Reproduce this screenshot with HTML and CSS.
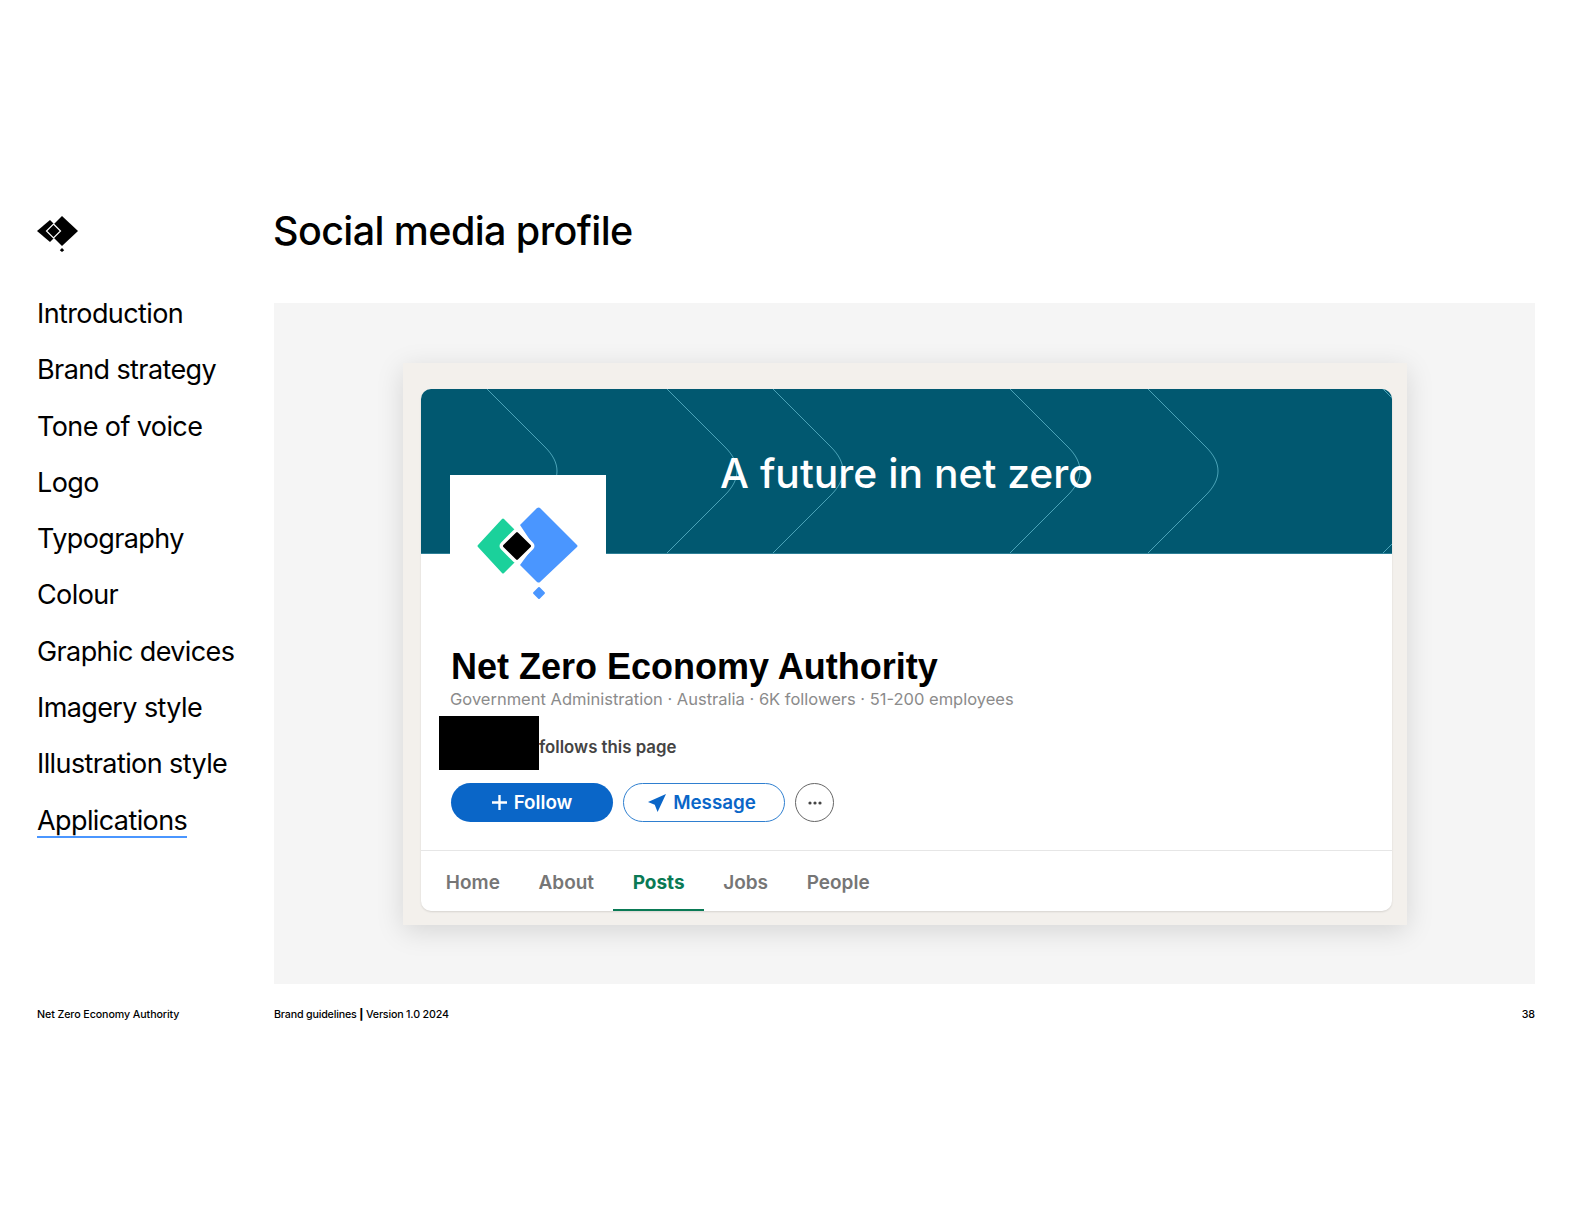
FILE: index.html
```html
<!DOCTYPE html>
<html lang="en">
<head>
<meta charset="utf-8">
<title>Social media profile</title>
<link rel="stylesheet" href="styles.css">
</head>
<body>
<div class="page">
  <div class="brand">
    <svg class="brand-mark" viewBox="0 0 42 36" width="42" height="36" aria-hidden="true">
      <path d="M13 4 L24 15 L13 26 L0 15 Z" fill="#000"/>
      <path d="M25 0 L41 15 L25 30 L10 15 Z" fill="#000"/>
      <path d="M16.500 8 L23.500 15 L16.500 22 L9.500 15 Z" fill="#000" stroke="#fff" stroke-width="1.200"/>
      <path d="M25 32 L27.200 34.200 L25 36 L22.800 34.200 Z" fill="#000"/>
    </svg>
  </div>
  <h1 class="title">Social media profile</h1>

  <nav class="nav">
    <a class="nav-item">Introduction</a>
    <a class="nav-item">Brand strategy</a>
    <a class="nav-item">Tone of voice</a>
    <a class="nav-item">Logo</a>
    <a class="nav-item">Typography</a>
    <a class="nav-item">Colour</a>
    <a class="nav-item">Graphic devices</a>
    <a class="nav-item">Imagery style</a>
    <a class="nav-item">Illustration style</a>
    <a class="nav-item"><span class="nav-current">Applications</span></a>
  </nav>

  <main class="frame">
    <section class="card">
      <div class="profile">
        <div class="banner">
          <svg class="chevrons" viewBox="0 0 971 164" aria-hidden="true">
            <defs>
              <path id="chev" d="M0 0 L58 58 C66 66 70 74 70 82 C70 90 66 98 58 106 L0 164"/>
            </defs>
            <use href="#chev" x="66"/>
            <use href="#chev" x="246"/>
            <use href="#chev" x="352"/>
            <use href="#chev" x="589"/>
            <use href="#chev" x="727"/>
            <use href="#chev" x="962"/>
          </svg>
          <p class="banner-text">A future in net zero</p>
        </div>
        <div class="avatar">
          <svg viewBox="0 0 156 145" width="156" height="145" aria-hidden="true">
            <path d="M54 44 L67 57 L67 85 L54 98 Q53 99 52 98 L28 72 Q27 71 28 70 L52 44 Q53 43 54 44 Z" fill="#1bd19b"/>
            <path d="M87 33 Q89 32 90 33 L127 70 Q128 71 127 72 L90 107 Q89 108 87 107 L70 90 L84 71 L70 50 Z" fill="#4a96ff"/>
            <rect x="55" y="59" width="24" height="24" rx="3" transform="rotate(45 67 71)" fill="#000" stroke="#fff" stroke-width="3.500"/>
            <rect x="84.500" y="113.500" width="9" height="9" rx="1" transform="rotate(45 89 118)" fill="#4a96ff"/>
          </svg>
        </div>
        <div class="details">
          <h2 class="org">Net Zero Economy Authority</h2>
          <p class="meta">Government Administration · Australia · 6K followers · 51-200 employees</p>
          <div class="follows">
            <span class="redact"></span>
            <span class="follows-text">follows this page</span>
          </div>
          <div class="actions">
            <button class="btn btn-follow">
              <svg viewBox="0 0 14 14" width="15" height="15" aria-hidden="true"><path d="M7 0 V14 M0 7 H14" stroke="#fff" stroke-width="2.200"/></svg>
              Follow
            </button>
            <button class="btn btn-message">
              <svg viewBox="0 0 16 16" width="18" height="18" aria-hidden="true"><path d="M16 0 L0 7 L6 9.500 L8.500 16 Z" fill="#0a66c8"/></svg>
              Message
            </button>
            <button class="btn-more" aria-label="More">
              <svg viewBox="0 0 14 4" width="14" height="4" aria-hidden="true"><circle cx="2" cy="2" r="1.600" fill="#444"/><circle cx="7" cy="2" r="1.600" fill="#444"/><circle cx="12" cy="2" r="1.600" fill="#444"/></svg>
            </button>
          </div>
        </div>
        <div class="tabs">
          <a class="tab">Home</a>
          <a class="tab">About</a>
          <a class="tab tab-active">Posts</a>
          <a class="tab">Jobs</a>
          <a class="tab">People</a>
        </div>
      </div>
    </section>
  </main>

  <div class="foot-left">Net Zero Economy Authority</div>
  <footer class="foot-right">
    <span class="foot-doc">Brand guidelines <b>|</b> Version 1.0 2024</span>
    <span>38</span>
  </footer>
</div>
</body>
</html>
```
FILE: styles.css
```css
* { box-sizing: border-box; }
html, body { margin: 0; padding: 0; background: #fff; }
body { font-family: Inter, "Liberation Sans", sans-serif; color: #000; }
a { color: inherit; text-decoration: none; }

.page {
  width: 1584px;
  height: 1224px;
  padding: 216px 49px 0 37px;
  display: grid;
  grid-template-columns: 237px 1fr;
  grid-template-rows: 70px 698px auto;
}

.brand { line-height: 0; }
.brand-mark { display: block; }

.title {
  margin: -1px 0 0 -1px;
  font-size: 39.500px;
  line-height: 32px;
  font-weight: 500;
  letter-spacing: -0.6px;
}

.nav { display: flex; flex-direction: column; }
.nav-item {
  font-size: 27px;
  line-height: 56.300px;
  height: 56.300px;
  letter-spacing: -0.6px;
}
.nav-current {
  display: inline-block;
  line-height: 30px;
  border-bottom: 2px solid #4a96ff;
}

.frame {
  margin-top: 17px;
  height: 681px;
  background: #f5f5f5;
  padding: 60px 128px 59px 129px;
}

.card {
  height: 562px;
  background: #f3f0ec;
  padding: 26px 15px 14px 18px;
  box-shadow: 0 6px 26px rgba(0, 0, 0, 0.13);
}

.profile {
  position: relative;
  height: 522px;
  background: #fff;
  border-radius: 10px;
  box-shadow: 0 1px 2px rgba(0, 0, 0, 0.12);
}

.banner {
  position: relative;
  height: 165px;
  background: #015870;
  border-radius: 10px 10px 0 0;
  border-bottom: 1px solid #2d7f96;
  overflow: hidden;
  display: flex;
  justify-content: center;
  padding-top: 58px;
}
.chevrons {
  position: absolute;
  inset: 0;
  width: 100%;
  height: 100%;
  fill: none;
  stroke: #4ba3b8;
  stroke-width: 1;
}
.banner-text {
  position: relative;
  margin: 0;
  color: #fff;
  font-size: 40.800px;
  line-height: 52px;
  font-weight: 500;
}

.avatar {
  position: absolute;
  left: 29px;
  top: 86px;
  width: 156px;
  height: 145px;
  background: #fff;
  line-height: 0;
}

.details { padding: 91px 0 0 30px; }
.org {
  margin: 0;
  font-family: "Liberation Sans", Arial, sans-serif;
  font-size: 36px;
  line-height: 44px;
  font-weight: 700;
}
.meta {
  margin: -1px 0 0 -1px;
  font-size: 16.500px;
  line-height: 22px;
  color: #8b8b8b;
}
.follows {
  display: flex;
  align-items: center;
  margin: 6px 0 0 -12px;
  height: 54px;
}
.redact { width: 100px; height: 54px; background: #000; }
.follows-text {
  margin: 7px 0 0 0;
  font-size: 16.800px;
  font-weight: 600;
  color: #444;
}

.actions { display: flex; align-items: center; gap: 10px; margin-top: 13px; }
.btn {
  height: 39px;
  width: 162px;
  border-radius: 20px;
  display: flex;
  align-items: center;
  justify-content: center;
  gap: 7px;
  padding: 0;
  font-family: Inter, "Liberation Sans", sans-serif;
  font-size: 18.800px;
  font-weight: 600;
}
.btn-follow { background: #0a66c8; color: #fff; border: 0; }
.btn-message {
  background: #fff;
  color: #0a66c8;
  border: 1.500px solid #2f7fd0;
  padding-right: 4px;
}
.btn-more {
  width: 39px;
  height: 39px;
  border-radius: 50%;
  border: 1.500px solid #666;
  background: #fff;
  padding: 0;
  display: flex;
  align-items: center;
  justify-content: center;
}

.tabs {
  position: absolute;
  left: 0;
  right: 0;
  bottom: 0;
  height: 61px;
  border-top: 1.500px solid #e6e6e6;
  display: flex;
  padding-left: 5.500px;
}
.tab {
  padding: 0 19.300px;
  font-size: 19px;
  line-height: 63px;
  height: 60px;
  font-weight: 600;
  color: #767676;
}
.tab-active {
  color: #0a7a55;
  font-weight: 700;
  border-bottom: 2px solid #0a7a55;
}

.foot-left, .foot-right {
  margin-top: 23px;
  font-size: 10.700px;
  line-height: 16px;
  font-weight: 500;
  letter-spacing: -0.1px;
}
.foot-right { display: flex; justify-content: space-between; }
.foot-doc { letter-spacing: -0.18px; }
.foot-right b { font-weight: 800; }
```
